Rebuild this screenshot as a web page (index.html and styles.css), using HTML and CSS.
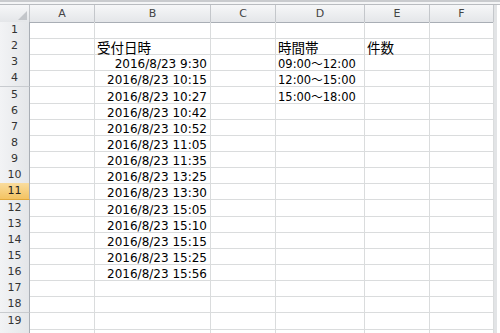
FILE: index.html
```html
<!DOCTYPE html>
<html lang="ja">
<head>
    <meta charset="UTF-8">
    <title>受付日時</title>
    <link rel="stylesheet" href="styles.css">
</head>
<body>

    <div class="toolbar"></div>

    <div class="sheet">
        <div class="row head">
            <div class="corner"><span class="tri"></span></div>
            <div>A</div><div>B</div><div>C</div><div>D</div><div>E</div><div>F</div>
            <div class="edge"></div>
        </div>

        <div class="row">
            <div class="rh">1</div>
            <div></div><div></div><div></div><div></div><div></div><div></div>
            <div class="edge"></div>
        </div>
        <div class="row">
            <div class="rh">2</div>
            <div></div><div class="jp">受付日時</div><div></div><div class="jp">時間帯</div><div class="jp">件数</div><div></div>
            <div class="edge"></div>
        </div>
        <div class="row">
            <div class="rh">3</div>
            <div></div><div class="r">2016/8/23 9:30</div><div></div><div>09:00～12:00</div><div></div><div></div>
            <div class="edge"></div>
        </div>
        <div class="row">
            <div class="rh">4</div>
            <div></div><div class="r">2016/8/23 10:15</div><div></div><div>12:00～15:00</div><div></div><div></div>
            <div class="edge"></div>
        </div>
        <div class="row">
            <div class="rh">5</div>
            <div></div><div class="r">2016/8/23 10:27</div><div></div><div>15:00～18:00</div><div></div><div></div>
            <div class="edge"></div>
        </div>
        <div class="row">
            <div class="rh">6</div>
            <div></div><div class="r">2016/8/23 10:42</div><div></div><div></div><div></div><div></div>
            <div class="edge"></div>
        </div>
        <div class="row">
            <div class="rh">7</div>
            <div></div><div class="r">2016/8/23 10:52</div><div></div><div></div><div></div><div></div>
            <div class="edge"></div>
        </div>
        <div class="row">
            <div class="rh">8</div>
            <div></div><div class="r">2016/8/23 11:05</div><div></div><div></div><div></div><div></div>
            <div class="edge"></div>
        </div>
        <div class="row">
            <div class="rh">9</div>
            <div></div><div class="r">2016/8/23 11:35</div><div></div><div></div><div></div><div></div>
            <div class="edge"></div>
        </div>
        <div class="row">
            <div class="rh">10</div>
            <div></div><div class="r">2016/8/23 13:25</div><div></div><div></div><div></div><div></div>
            <div class="edge"></div>
        </div>
        <div class="row">
            <div class="rh active">11</div>
            <div></div><div class="r">2016/8/23 13:30</div><div></div><div></div><div></div><div></div>
            <div class="edge"></div>
        </div>
        <div class="row">
            <div class="rh">12</div>
            <div></div><div class="r">2016/8/23 15:05</div><div></div><div></div><div></div><div></div>
            <div class="edge"></div>
        </div>
        <div class="row">
            <div class="rh">13</div>
            <div></div><div class="r">2016/8/23 15:10</div><div></div><div></div><div></div><div></div>
            <div class="edge"></div>
        </div>
        <div class="row">
            <div class="rh">14</div>
            <div></div><div class="r">2016/8/23 15:15</div><div></div><div></div><div></div><div></div>
            <div class="edge"></div>
        </div>
        <div class="row">
            <div class="rh">15</div>
            <div></div><div class="r">2016/8/23 15:25</div><div></div><div></div><div></div><div></div>
            <div class="edge"></div>
        </div>
        <div class="row">
            <div class="rh">16</div>
            <div></div><div class="r">2016/8/23 15:56</div><div></div><div></div><div></div><div></div>
            <div class="edge"></div>
        </div>
        <div class="row">
            <div class="rh">17</div>
            <div></div><div></div><div></div><div></div><div></div><div></div>
            <div class="edge"></div>
        </div>
        <div class="row">
            <div class="rh">18</div>
            <div></div><div></div><div></div><div></div><div></div><div></div>
            <div class="edge"></div>
        </div>
        <div class="row">
            <div class="rh">19</div>
            <div></div><div></div><div></div><div></div><div></div><div></div>
            <div class="edge"></div>
        </div>
        <!-- row 20 only peeks in at the bottom edge -->
        <div class="row">
            <div class="rh"></div>
            <div></div><div></div><div></div><div></div><div></div><div></div>
            <div class="edge"></div>
        </div>
    </div>

</body>
</html>
```

FILE: styles.css
```css
body {
    margin: 0;
    background: white;
    font-family: "DejaVu Sans", "Noto Sans CJK JP", sans-serif;
    font-size: 11.5px;
    color: black;
    overflow: hidden;
}

.toolbar {
    height: 5px;
    box-sizing: border-box;
    background: #f4f5f6;
    border-top: 2px solid #c9cbce;
    border-bottom: 1px solid #b9bcc0;
}

.row {
    display: grid;
    grid-template-columns: 30px 65px 116px 65px 89px 65px 64px 1fr;
    height: 16.15px;
}

.row > div {
    box-sizing: border-box;
    display: flex;
    align-items: flex-end;
    padding: 0 2px;
    line-height: 12px;
    white-space: nowrap;
    border-right: 1px solid #dadcdd;
    border-bottom: 1px solid #dadcdd;
}

.row .r {
    justify-content: flex-end;
    padding-right: 3px;
    font-size: 12px;
}

.row .jp {
    font-family: "Noto Sans CJK JP", sans-serif;
    font-size: 13.5px;
    line-height: 13px;
}

/* column headers */
.head {
    height: 17px;
}

.head > div {
    justify-content: center;
    align-items: center;
    line-height: 17px;
    font-size: 11px;
    color: #444;
    background: linear-gradient(#f6f7f8, #e4e6e9);
    border-right: 1px solid #c4c7cb;
    border-bottom: 1px solid #a9aeb5;
}

.head > .corner {
    justify-content: flex-end;
    align-items: flex-end;
    padding: 0 2px 2px 0;
}

.tri {
    width: 0;
    height: 0;
    border-left: 9px solid transparent;
    border-bottom: 9px solid #c3c6ca;
}

/* row headers */
.row > .rh {
    justify-content: center;
    align-items: center;
    line-height: 16px;
    font-size: 11px;
    color: #333;
    background: linear-gradient(to right, #f2f3f5, #e4e6e9);
    border-right: 1px solid #a9aeb5;
    border-bottom: 1px solid #c8cbcf;
}

.row > .rh.active {
    background: linear-gradient(#f9dc9e, #f3c362);
    border-bottom-color: #e0a83d;
    color: #222;
}

.row > .edge,
.head > .edge {
    background: white;
    border-right: none;
    border-bottom: none;
    border-left: 3px solid #e2e4e6;
}
```
